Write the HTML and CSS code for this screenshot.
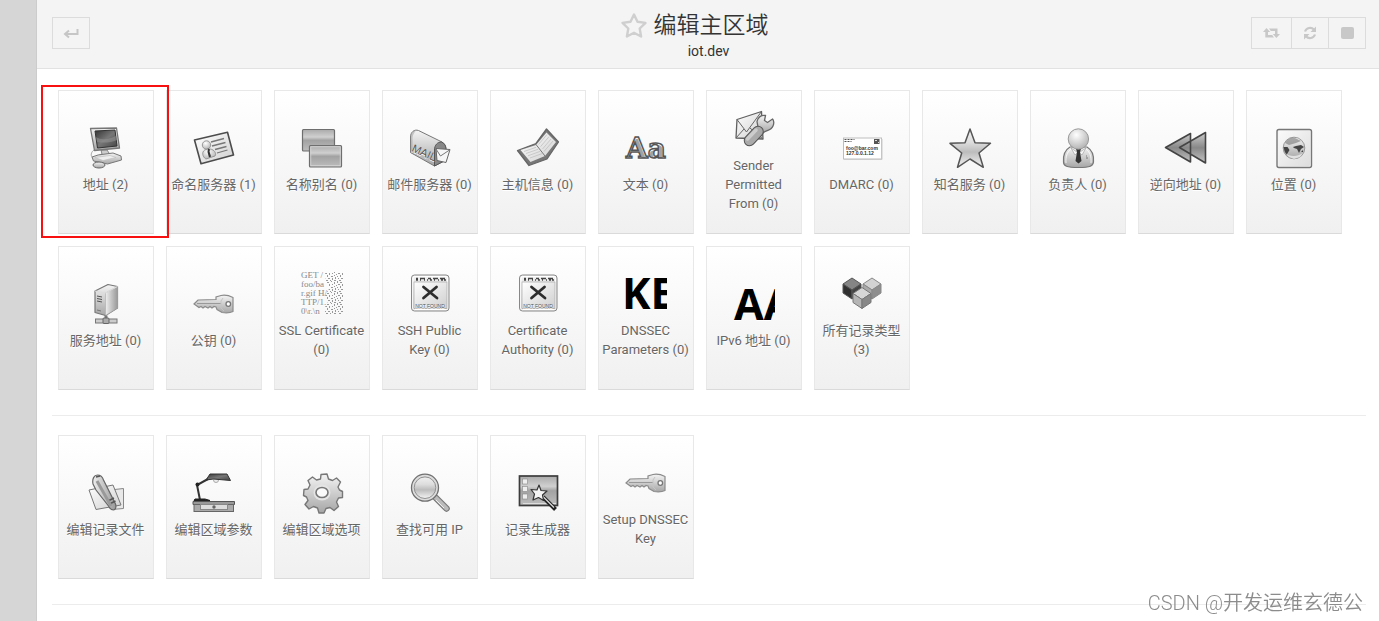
FILE: index.html
```html
<!DOCTYPE html>
<html lang="zh-CN">
<head>
<meta charset="utf-8">
<title>编辑主区域</title>
<link rel="stylesheet" href="styles.css">
</head>
<body>
<svg class="defs" aria-hidden="true">
  <defs>
    <linearGradient id="metal" x1="0" y1="0" x2="0" y2="1"><stop offset="0" stop-color="#f4f4f4"/><stop offset="1" stop-color="#a6a6a6"/></linearGradient>
    <linearGradient id="panel" x1="0" y1="0" x2="0" y2="1"><stop offset="0" stop-color="#aaa"/><stop offset=".35" stop-color="#d0d0d0"/><stop offset=".5" stop-color="#a2a2a2"/><stop offset="1" stop-color="#bdbdbd"/></linearGradient>
    <linearGradient id="arrow" x1="0" y1="0" x2="0" y2="1"><stop offset="0" stop-color="#ccc"/><stop offset=".5" stop-color="#888"/><stop offset="1" stop-color="#c4c4c4"/></linearGradient>
    <linearGradient id="shine" x1="0" y1="0" x2="0" y2="1"><stop offset="0" stop-color="#f0f0f0"/><stop offset=".35" stop-color="#ddd"/><stop offset=".6" stop-color="#bcbcbc"/><stop offset="1" stop-color="#f4f4f4"/></linearGradient>
    <linearGradient id="dark" x1="0" y1="0" x2="1" y2="1"><stop offset="0" stop-color="#333"/><stop offset=".5" stop-color="#777"/><stop offset="1" stop-color="#444"/></linearGradient>
    <linearGradient id="paper" x1="0" y1="0" x2="1" y2="1"><stop offset="0" stop-color="#fff"/><stop offset="1" stop-color="#cfcfcf"/></linearGradient>
    <linearGradient id="side" x1="0" y1="0" x2="1" y2="0"><stop offset="0" stop-color="#eee"/><stop offset="1" stop-color="#999"/></linearGradient>
    <radialGradient id="ball" cx=".4" cy=".3" r=".8"><stop offset="0" stop-color="#fff"/><stop offset="1" stop-color="#aaa"/></radialGradient>
    <pattern id="noise" width="13" height="11" patternUnits="userSpaceOnUse">
      <path d="M0 0h1v2H0zM3 1h2v1H3zM7 0h1v1H7zM10 1h1v2h-1zM1 3h2v1H1zM5 3h1v2H5zM8 3h1v1H8zM12 4h1v1h-1zM0 6h1v1H0zM3 5h1v2H3zM7 6h2v1H7zM10 5h1v1h-1zM1 8h1v1H1zM4 8h2v1H4zM8 8h1v2H8zM11 7h1v2h-1zM2 10h2v1H2zM6 10h1v1H6zM10 10h2v1h-2z" fill="#999"/>
    </pattern>
    <symbol id="key" viewBox="0 0 48 48">
      <path d="M4 24l4-4 18-.5v-2.500l5-1.500c5-1 10 1 12 2v14c-3 1.500-7 1.500-11 1l-5-3-1-2.500-2-.5-2 1.500-2-1.500-2 1.500-3-1.500-2 1.500-2-1.500-2 1z" fill="url(#metal)" stroke="#8b8b8b" stroke-width="1.200"/>
      <path d="M7 23.500h24" stroke="#999"/><path d="M33 18l-2 3v7l3 3" stroke="#c4c4c4" fill="none"/>
      <circle cx="38.300" cy="24" r="2.300" fill="#fff" stroke="#777" stroke-width="1.300"/>
    </symbol>
    <symbol id="missing" viewBox="0 0 48 48">
      <rect x="5.500" y="5" width="37.500" height="36" rx="3" fill="#eee" stroke="#888"/>
      <rect x="7" y="6.500" width="34.500" height="33" rx="1.500" fill="url(#metal)" stroke="#fff"/>
      <path d="M10 8.500h2m2 0h5m3 0h3m2 0h5m2 0h5M10 10h2m2 0h1m3 0h1m2 0h1m2 0h2m2 0h1m3 0h1m2 0h2m1 0h2" stroke="#444" stroke-width="1.300"/>
      <rect x="8" y="12" width="33" height="26.500" fill="url(#paper)" stroke="#aaa" stroke-width=".7"/>
      <path d="M17.500 17l13.500 11M30.500 17L17.500 28" stroke="#2d2d2d" stroke-width="2.800" stroke-linecap="round"/>
      <text x="24" y="37.500" text-anchor="middle" class="art-tiny">NOT FOUND</text>
    </symbol>
  </defs>
</svg>
<div class="app">
  <aside class="sidebar"></aside>
  <div class="main">
    <header class="header">
      <div class="header-side">
        <button class="tool" type="button" aria-label="返回"><svg width="16" height="14" viewBox="0 0 16 14" fill="none" stroke="#c6c6c6" stroke-width="2"><path d="M14.500 3v5H2M6 4.500L2 8l4 3.500"/></svg></button>
      </div>
      <div class="heading">
        <h1><svg width="28" height="28" viewBox="0 0 28 28" fill="none" stroke="#cfcfcf" stroke-width="2.400" stroke-linejoin="round"><path d="M14 2.500l3.500 7.300 8 1.100-5.800 5.600 1.400 8-7.100-3.800-7.100 3.800 1.400-8L2.500 10.900l8-1.100z"/></svg>编辑主区域</h1>
        <p>iot.dev</p>
      </div>
      <div class="header-side tools">
        <button class="tool tool-wide" type="button" aria-label="应用"><svg width="17" height="12" viewBox="0 0 17 12" fill="#c8c8c8"><path d="M3.500 1L0 5h2.300v5.500H11L9.200 8H5V5h2.200zM6 1.500h8.500V7H17l-3.600 4L9.800 7H12V4H7.800z"/></svg></button>
        <button class="tool" type="button" aria-label="刷新"><svg width="14" height="14" viewBox="0 0 14 14"><path d="M2 5.500a5.300 5.300 0 0 1 9-1.800M12 8.500a5.300 5.300 0 0 1-9 1.800" fill="none" stroke="#c8c8c8" stroke-width="2.200"/><path d="M13 .5v5.500H7.500zM1 13.500V8h5.500z" fill="#c8c8c8"/></svg></button>
        <button class="tool" type="button" aria-label="停止"><svg width="13" height="12" viewBox="0 0 13 12"><rect width="13" height="12" rx="2" fill="#c8c8c8"/></svg></button>
      </div>
    </header>
    <main class="content">
      <section class="tiles">
        <a class="tile marked" href="#"><svg class="icon" viewBox="0 0 48 48">
          <path d="M19 26l1 4-7 3 16-1-4-6z" fill="#ccc" stroke="#888"/>
          <path d="M12 26c-3 2-4 6-1 8" fill="none" stroke="#aaa"/>
          <path d="M8.500 4.500L34.500 4l3 20-25 2.500z" fill="url(#metal)" stroke="#777" stroke-width="1.300" stroke-linejoin="round"/>
          <path d="M13 7l20-1 2 16-19.500 2z" fill="url(#dark)" stroke="#333"/><path d="M14 13c6 4 14 2 20-1l1 4c-7 3-13 3-20 2z" fill="#999" opacity=".5"/>
          <path d="M10 33l6-2 15-2 8 3 .5 4-14 4-14-3z" fill="url(#metal)" stroke="#777" stroke-linejoin="round"/><path d="M13 33.500l15-2 6 2-13 3z" fill="#eee" stroke="#bbb" stroke-width=".6"/>
          <ellipse cx="17" cy="41" rx="6" ry="3" fill="url(#metal)" stroke="#666"/></svg><span>地址 (2)</span></a>
        <a class="tile" href="#"><svg class="icon" viewBox="0 0 48 48">
          <path d="M4.500 16L37.500 8.300 43.500 31 11 39.700z" fill="url(#paper)" stroke="#4c4c4c" stroke-width="1.600" stroke-linejoin="round"/>
          <path d="M21 18l13-3.500M22 22l13.500-3.500M25 25.500l11.500-3M27 29l10.500-3" stroke="#777" stroke-width="1.300"/>
          <circle cx="16.500" cy="21" r="4.200" fill="url(#ball)" stroke="#888" stroke-width=".8"/>
          <path d="M13 28c1-3 7-4 10-2 3 2 3 5 2 6l-9 3c-2-1-4-4-3-7z" fill="url(#ball)" stroke="#888" stroke-width=".8"/><path d="M18 24.500l2 1-.5 2 1.500 5-2 1-1.500-5.500z" fill="#333"/></svg><span>命名服务器 (1)</span></a>
        <a class="tile" href="#"><svg class="icon" viewBox="0 0 48 48">
          <rect x="4.500" y="5.500" width="32" height="21.500" rx="1" fill="url(#panel)" stroke="#6e6e6e" stroke-width="1.200"/>
          <rect x="11.500" y="21.500" width="32" height="21.500" rx="1" fill="url(#panel)" stroke="#6e6e6e" stroke-width="1.200"/><rect x="12.800" y="22.800" width="29.400" height="18.900" fill="none" stroke="#d8d8d8" stroke-width=".8"/></svg><span>名称别名 (0)</span></a>
        <a class="tile" href="#"><svg class="icon" viewBox="0 0 48 48">
          <path d="M4.500 28.500V13c0-5 4-8 8-6.500L36 18c3 2 4 5 4 8v10l-11.500 6z" fill="url(#metal)" stroke="#777" stroke-linejoin="round"/>
          <path d="M28.500 42V26c0-5 3-8 7-8 3 1 4.500 4 4.500 7v11z" fill="#888" stroke="#555"/>
          <path d="M30 24.500l14 1-4 13-9-2z" fill="#f6f6f6" stroke="#666"/><path d="M30 25l4.500 7 9-6" fill="none" stroke="#777"/>
          <path d="M4.500 28.500V13c0-4 3-7 6-7 0 0-4 4-4 8v16z" fill="#999" opacity=".5"/>
          <text class="art-mail" transform="translate(5 27) rotate(24)">MAIL</text></svg><span>邮件服务器 (0)</span></a>
        <a class="tile" href="#"><svg class="icon" viewBox="0 0 48 48">
          <path d="M3.500 26.500L22 19.500 32.500 5l12 13-11.500 17L15 41.500z" fill="#777" stroke="#666" stroke-width="1.300" stroke-linejoin="round"/>
          <path d="M6.500 26l15.500-5L32.500 8.500 42 18 31 32l-14.500 6z" fill="url(#paper)"/>
          <path d="M22 20.500L31 32" stroke="#777"/><path d="M10 27.500l12-4.200M12 29.500l12-4.200M14 31.800l12-4.400M16 34l12-4.400M24.500 20.500l8.500-10M26.500 22.700l8.500-10M28.500 25l8.500-10M30 27.500l9-10.500" stroke="#bbb" stroke-width=".7"/></svg><span>主机信息 (0)</span></a>
        <a class="tile" href="#"><svg class="icon" viewBox="0 0 48 48"><text class="art-serif" x="4" y="34">Aa</text></svg><span>文本 (0)</span></a>
        <a class="tile" href="#"><svg class="icon" viewBox="0 0 48 48">
          <path d="M7 14.500L31.500 6.500 33 34 6 33z" fill="url(#paper)" stroke="#606060" stroke-width="1.300" stroke-linejoin="round"/>
          <path d="M7 14.500l9.500 12.500L31.500 6.500M6 33l8-9M33 34l-13-11" fill="none" stroke="#666"/>
          <path d="M28 22l5 6c3-3 8-2 10-7 1.500-3 .5-6-.5-7l-5 3.500-3-2 1-5c-4-1-8 2-8.500 6z" fill="url(#metal)" stroke="#666" stroke-width="1.300"/>
          <path d="M19.500 35.500l8.500-9" stroke="#555" stroke-width="11.500" stroke-linecap="round"/><path d="M19.500 35.500l8.500-9" stroke="#aaa" stroke-width="9.500" stroke-linecap="round"/><path d="M17.500 34l8.500-9" stroke="#ccc" stroke-width="3.500" stroke-linecap="round"/></svg><span>Sender Permitted From (0)</span></a>
        <a class="tile" href="#"><svg class="icon" viewBox="0 0 48 48">
          <rect x="5.500" y="14" width="38" height="21" fill="#fff" stroke="#bdbdbd"/><path d="M6 35.500h38V15" fill="none" stroke="#ccc"/>
          <path d="M6.500 15.500h10M6.500 17.500h7" stroke="#555" stroke-dasharray="2 1"/><rect x="36" y="15" width="5.500" height="5" fill="#555"/><path d="M37 16h2v1h-2zM40 18h1v1h-1z" fill="#ddd"/>
          <text class="art-card" x="8" y="26">foo@bar.com</text><text class="art-card" x="8" y="31">127.0.0.1.12</text></svg><span>DMARC (0)</span></a>
        <a class="tile" href="#"><svg class="icon" viewBox="0 0 48 48"><path d="M24 5l5 13.700 15.500.6L33 29l4.300 14.300L24 35l-12.500 8.300L15.700 29 4 19.300l15-.6z" fill="url(#shine)" stroke="#555" stroke-width="1.500" stroke-linejoin="round"/></svg><span>知名服务 (0)</span></a>
        <a class="tile" href="#"><svg class="icon" viewBox="0 0 48 48">
          <path d="M16 23c-5 3-7 9-6.500 15 0 4 3 5.500 15 5.500S39 42 39.500 38C40 32 38 26 33 23z" fill="url(#metal)" stroke="#777" stroke-width="1.200"/><path d="M12 39c-.5-6 1-11 5-14M37 39c.5-6-1-11-5-14" fill="none" stroke="#fff" opacity=".8"/>
          <path d="M17 24l7.500 5 7.500-5-4 7-3.500-3-3.500 3z" fill="#f6f6f6" stroke="#999" stroke-width=".6"/>
          <path d="M22 25h5l-1 3 1.500 9-3 2.500-3-2.500L23 28z" fill="#333"/><path d="M32 32h1m-1 2h2" stroke="#777"/>
          <circle cx="24.400" cy="15" r="10.200" fill="url(#ball)" stroke="#999"/></svg><span>负责人 (0)</span></a>
        <a class="tile" href="#"><svg class="icon" viewBox="0 0 48 48"><path d="M3.500 23.500L28.500 9.500V38zM17.500 23.500L43.500 8.500V39z" fill="url(#arrow)" stroke="#444" stroke-width="1.600" stroke-linejoin="round"/></svg><span>逆向地址 (0)</span></a>
        <a class="tile" href="#"><svg class="icon" viewBox="0 0 48 48">
          <rect x="7" y="5.500" width="34.500" height="38" rx="2" fill="#f2f2f2" stroke="#777" stroke-width="1.400"/><rect x="8.500" y="7" width="31.500" height="35" rx="1" fill="url(#paper)" opacity=".6"/>
          <circle cx="24" cy="24" r="10.800" fill="url(#metal)" stroke="#999"/><path d="M13.500 23l4 0 2 3-3 5-2-4zM23 23l3-1 5-1 3 2-3 2-2 4-2-4-3-1zM31 28l2-2v2z" fill="#444"/><path d="M15 19c2-4 6-6 10-5l6 3-5 2-7 2z" fill="#777" opacity=".6"/><path d="M15 29c5 4 12 4 18 0l-3 4-6 2-5-2z" fill="#eee" opacity=".8"/></svg><span>位置 (0)</span></a>

        <a class="tile" href="#"><svg class="icon" viewBox="0 0 48 48">
          <path d="M13 11L26 4.500l9.500 2V28l-12 7.500L13 32.500z" fill="url(#metal)" stroke="#777" stroke-width="1.200" stroke-linejoin="round"/><path d="M23.500 13l12-6.500V28l-12 7.500z" fill="url(#side)" stroke="#aaa" stroke-width=".6"/><path d="M13 11l10.500 2L35.500 6.500" fill="none" stroke="#ddd"/>
          <path d="M15 16l5 1M15 18.500l5 1M15 21l5 1" stroke="#555"/><path d="M15 30l4 1" stroke="#777"/>
          <path d="M24 35.500v4" stroke="#777" stroke-width="3"/><rect x="13.500" y="39" width="21.500" height="4" fill="#ccc" stroke="#777"/><rect x="21" y="38" width="6" height="5.500" rx="1" fill="#aaa" stroke="#666"/></svg><span>服务地址 (0)</span></a>
        <a class="tile" href="#"><svg class="icon"><use href="#key"/></svg><span>公钥 (0)</span></a>
        <a class="tile" href="#"><svg class="icon" viewBox="0 0 48 48">
          <g class="art-code"><text x="3" y="8">GET /</text><text x="3" y="17">foo/ba</text><text x="3" y="26">r.gif H/</text><text x="3" y="35">TTP/1.</text><text x="3" y="44">0\r.\n</text></g>
          <path d="M27 2h18v42H27V37l3-5-3-7 4-6-3-8z" fill="url(#noise)"/></svg><span>SSL Certificate (0)</span></a>
        <a class="tile" href="#"><svg class="icon"><use href="#missing"/></svg><span>SSH Public Key (0)</span></a>
        <a class="tile" href="#"><svg class="icon"><use href="#missing"/></svg><span>Certificate Authority (0)</span></a>
        <a class="tile" href="#"><svg class="icon" viewBox="0 0 48 48"><svg width="45" height="48"><text class="art-bold" x="0" y="39">KE</text></svg></svg><span>DNSSEC Parameters (0)</span></a>
        <a class="tile" href="#"><svg class="icon" viewBox="0 0 48 48"><svg width="45" height="48"><text class="art-bold" x="4" y="40">AA</text></svg></svg><span>IPv6 地址 (0)</span></a>
        <a class="tile" href="#"><svg class="icon" viewBox="0 0 48 48" stroke="#555" stroke-linejoin="round">
          <path d="M14 8l9 6-9 6-9-6z" fill="#858585"/><path d="M5 14l9 6v9l-9-6z" fill="#303030"/><path d="M23 14l-9 6v9l9-6z" fill="#444"/>
          <g stroke="#888"><path d="M34 8l9 6-9 6-9-6z" fill="#d2d2d2"/><path d="M25 14l9 6v9l-9-6z" fill="#aaa"/><path d="M43 14l-9 6v9l9-6z" fill="#8d8d8d"/></g>
          <g stroke="#777"><path d="M24 17.500l9 6-9 6-9-6z" fill="#d6d6d6"/><path d="M15 23.500l9 6v9l-9-6z" fill="#b5b5b5"/><path d="M33 23.500l-9 6v9l9-6z" fill="#888"/></g></svg><span>所有记录类型 (3)</span></a>
      </section>
      <hr>
      <section class="tiles">
        <a class="tile" href="#"><svg class="icon" viewBox="0 0 48 48">
          <path d="M28 21l13.500-1.500v20l-12 1z" fill="#e8e8e8" stroke="#888"/><path d="M7 21l24-5 8 20-25 4.500z" fill="url(#paper)" stroke="#777" stroke-linejoin="round"/>
          <path d="M11 15c-1-5 1-9 4.500-9 3 0 5 2 6 5l12 24c1 3 0 6-2 6s-4-2-5-4L14 21z" fill="url(#side)" stroke="#666" stroke-width="1.200"/><path d="M26 32l6-3M27.500 35l6-3M14 8l4-1" stroke="#555" stroke-width="1.500"/><path d="M15 12l14 25" stroke="#999" stroke-width="3"/></svg><span>编辑记录文件</span></a>
        <a class="tile" href="#"><svg class="icon" viewBox="0 0 48 48">
          <circle cx="26" cy="11" r="2.500" fill="#eee" stroke="#aaa"/><path d="M16 11l4-6h17l3.500 6.500-17-1.500z" fill="url(#dark)" stroke="#333"/>
          <path d="M18 10L7 16l3 15" fill="none" stroke="#333" stroke-width="2"/><circle cx="7.500" cy="15.500" r="2" fill="#222"/><path d="M5 30h10l5 1.500H4z" fill="#222" stroke="#222"/>
          <path d="M3 32.500h41.500v3H3z" fill="#999" stroke="#555"/><rect x="4" y="35.500" width="39.500" height="7" fill="#aaa" stroke="#666"/><rect x="10.500" y="35.500" width="27" height="5" fill="#ddd" stroke="#888"/><circle cx="24" cy="38" r="1.700" fill="#666"/></svg><span>编辑区域参数</span></a>
        <a class="tile" href="#"><svg class="icon" viewBox="0 0 48 48">
          <path d="M23 5.500l6-.5 1.500 5 4 1.500 4-2.500 4 4-2.500 5 1.500 3 3 1.500v6l-4 .5-2 4 2 4.500-4.500 4-4-3-4 1-2 4.500h-5l-1.500-5-4-1.500-4.500 2.500-4-4.500 3-4-1.500-3.500-3-1.500.5-6 4-.5 2-4-2-4.500 4.500-3.500 4 3 4-1z" fill="url(#metal)" stroke="#777" stroke-width="1.400" stroke-linejoin="round"/>
          <ellipse cx="24" cy="23.500" rx="8.500" ry="8" fill="#e4e4e4"/><ellipse cx="24" cy="23.500" rx="6" ry="5" fill="#fafafa" stroke="#777" stroke-width="1.600"/></svg><span>编辑区域选项</span></a>
        <a class="tile" href="#"><svg class="icon" viewBox="0 0 48 48">
          <path d="M30 29l10.500 10.500" stroke="#777" stroke-width="6.500" stroke-linecap="round"/><path d="M30 29l10.500 10.500" stroke="#bbb" stroke-width="4.200" stroke-linecap="round"/><path d="M30 31l8 8" stroke="#eee"/>
          <circle cx="19" cy="18.700" r="13.500" fill="#ddd" stroke="#707070" stroke-width="1.300"/><circle cx="19" cy="18.700" r="10.800" fill="url(#shine)" stroke="#909090"/></svg><span>查找可用 IP</span></a>
        <a class="tile" href="#"><svg class="icon" viewBox="0 0 48 48">
          <rect x="5.500" y="7" width="38" height="29.500" fill="url(#panel)" stroke="#3c3c3c" stroke-width="1.700"/><path d="M9 34.500h33" stroke="#ddd"/>
          <g fill="#eee" stroke="#888" stroke-width=".6"><rect x="8.500" y="10" width="5" height="5"/><rect x="8.500" y="17.500" width="5" height="5"/><rect x="8.500" y="25" width="5" height="5"/></g>
          <path d="M29 28l12.500 12.500" stroke="#222" stroke-width="4"/><path d="M29 27.500l11 11" stroke="#ddd" stroke-width="1.200"/>
          <path d="M25 16l2 5.500 6 .5-4.500 4 1 5.500-5-3-5.500 2.500 1.500-6-3.500-4.500 6 .5z" fill="#f3f3f3" stroke="#333" stroke-width="1.200" stroke-linejoin="round"/></svg><span>记录生成器</span></a>
        <a class="tile" href="#"><svg class="icon"><use href="#key"/></svg><span>Setup DNSSEC Key</span></a>
      </section>
      <hr>
    </main>
  </div>
</div>
<div class="watermark">CSDN @开发运维玄德公</div>
</body>
</html>
```
FILE: styles.css
```css
* { box-sizing: border-box; }
body {
  margin: 0;
  background: #fff;
  color: #333;
  font-family: Roboto, "Noto Sans CJK SC", sans-serif;
}
.defs { position: absolute; width: 0; height: 0; }
.app { display: flex; min-height: 100vh; }
.sidebar { flex: 0 0 37px; background: #d6d6d6; border-right: 1px solid #ccc; }
.main { flex: 1; min-width: 0; }

.header {
  display: flex;
  align-items: flex-start;
  height: 69px;
  padding: 0 13px 0 15px;
  background: #f4f4f4;
  border-bottom: 1px solid #e2e2e2;
}
.header-side { flex: 1; display: flex; padding-top: 17px; }
.tools { justify-content: flex-end; }
.tool {
  display: flex;
  align-items: center;
  justify-content: center;
  width: 38px;
  height: 32px;
  padding: 0;
  border: 1px solid #dcdcdc;
  background: transparent;
}
.tool + .tool { margin-left: -1px; }
.tool-wide { width: 41px; }
.heading { padding-right: 30px; text-align: center; }
.heading h1 {
  display: flex;
  align-items: center;
  justify-content: center;
  gap: 6px;
  margin: 9px 0 0;
  font-size: 23px;
  font-weight: 350;
  line-height: 33px;
}
.heading p { margin: 0 0 0 29px; font-size: 14px; line-height: 18px; }

.content { padding: 21px 13px 0 15px; }
.tiles { display: flex; flex-wrap: wrap; gap: 12px; padding: 0 6px; }
.tile {
  position: relative;
  display: flex;
  flex-direction: column;
  align-items: center;
  justify-content: center;
  gap: 3px;
  width: 96px;
  height: 144px;
  padding: 0 4px 7px 3px;
  border: 1px solid #e8e8e8;
  border-bottom-color: #dadada;
  background: linear-gradient(#fff, #f0f0f0);
  color: #666;
  font-size: 13px;
  line-height: 19px;
  text-align: center;
  text-decoration: none;
  text-shadow: 0 1px 0 #fff;
}
.icon { flex: none; width: 48px; height: 48px; }
.marked { z-index: 1; }
.marked::after {
  content: "";
  position: absolute;
  inset: -6px -16px -5px -18px;
  border: 2px solid #f81010;
}
hr { margin: 25px 0 19px; border: 0; border-top: 1px solid #ececec; }

.art-tiny { font: 5px "Liberation Sans", sans-serif; fill: #555; }
.art-mail { font: 11px "Liberation Sans", sans-serif; fill: #555; }
.art-card { font: bold 5px "Liberation Sans", sans-serif; fill: #333; }
.art-serif { font: bold 28px "DejaVu Serif", serif; fill: #a2a2a2; stroke: #555; stroke-width: 1.5px; }
.art-code { font: 9px "Liberation Serif", serif; fill: #888; }
.art-bold { font: bold 43px "Open Sans", sans-serif; fill: #000; }

.watermark {
  position: fixed;
  right: 16px;
  bottom: 3px;
  color: #8c8c8c;
  font-size: 20px;
  font-weight: 350;
  line-height: 30px;
}
```
